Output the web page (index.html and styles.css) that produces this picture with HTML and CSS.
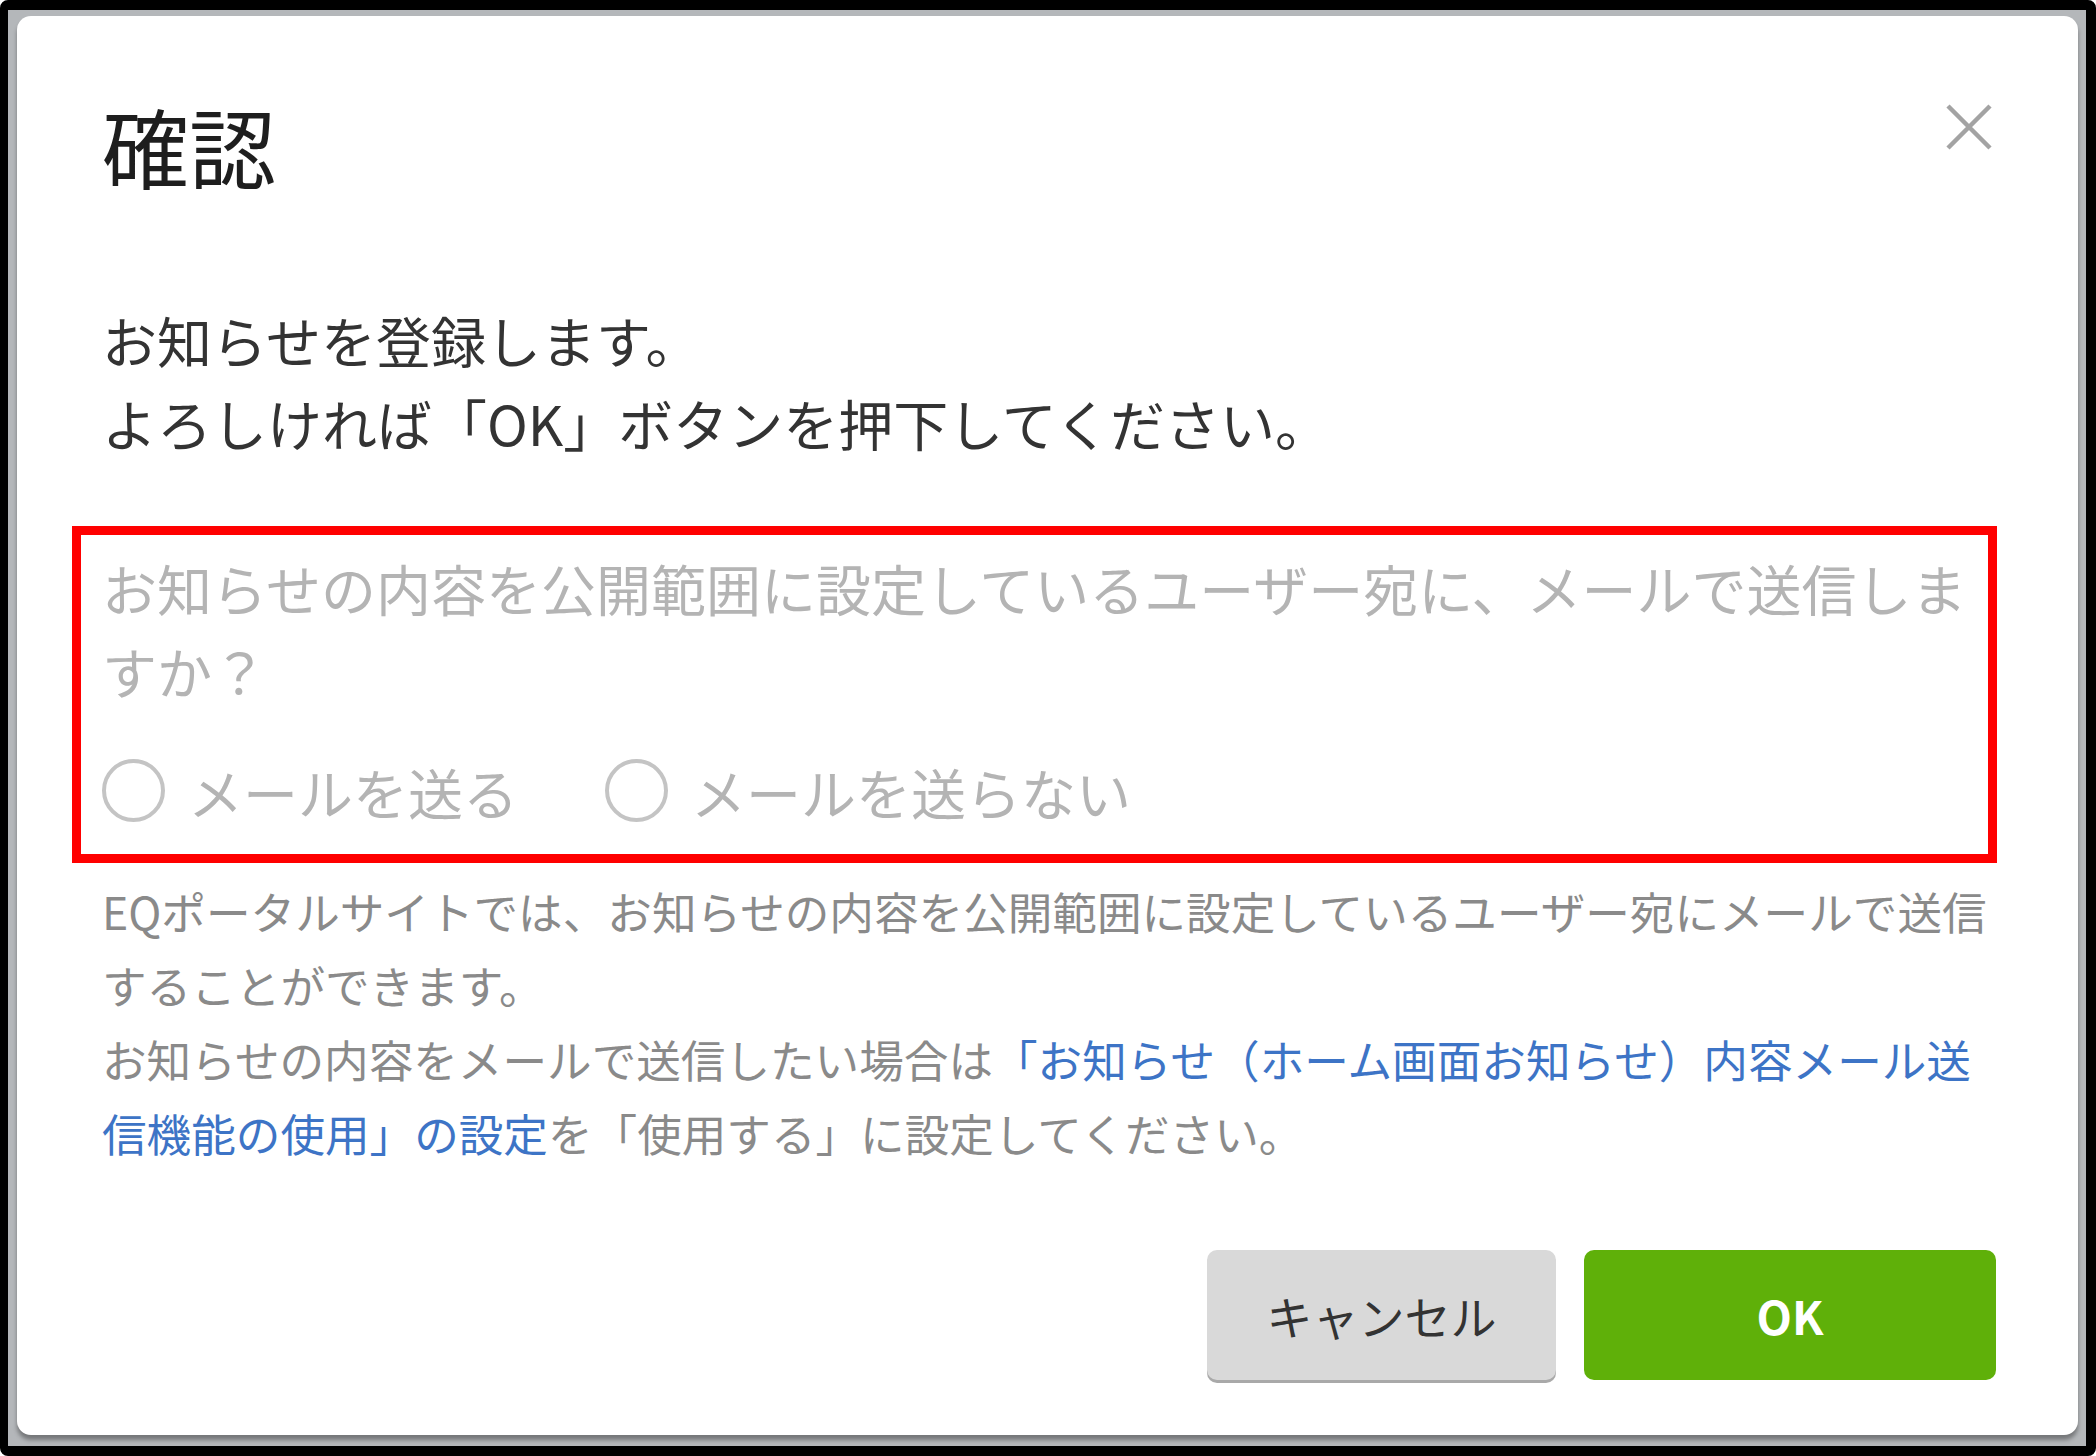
FILE: index.html
```html
<!DOCTYPE html>
<html lang="ja">
<head>
  <meta charset="UTF-8" />
  <meta name="viewport" content="width=device-width, initial-scale=1.0"/>
  <title>確認</title>
  <link rel="stylesheet" href="styles.css">
</head>
<body>

  <div class="frame">
    <div class="dialog">

      <div class="dialog-header">
        <h1 class="dialog-title">確認</h1>
        <button class="close-button" aria-label="閉じる">
          <svg width="48" height="48" viewBox="0 0 48 48">
            <path d="M3 3 L45 45 M45 3 L3 45" stroke="#a3a3a3" stroke-width="4.5" fill="none"/>
          </svg>
        </button>
      </div>

      <p class="message">お知らせを登録します。<br>よろしければ「OK」ボタンを押下してください。</p>

      <div class="mail-option">
        <p class="question">お知らせの内容を公開範囲に設定しているユーザー宛に、メールで送信しますか？</p>
        <div class="radio-row">
          <label class="radio-item"><span class="radio-circle"></span><span class="radio-label">メールを送る</span></label>
          <label class="radio-item"><span class="radio-circle"></span><span class="radio-label">メールを送らない</span></label>
        </div>
      </div>

      <p class="help">EQポータルサイトでは、お知らせの内容を公開範囲に設定しているユーザー宛にメールで送信することができます。<br>お知らせの内容をメールで送信したい場合は<a class="help-link" href="#">「お知らせ（ホーム画面お知らせ）内容メール送信機能の使用」の設定</a>を「使用する」に設定してください。</p>

      <div class="dialog-footer">
        <button class="btn btn-cancel">キャンセル</button>
        <button class="btn btn-ok">OK</button>
      </div>

    </div>
  </div>

</body>
</html>
```

FILE: styles.css
```css
body {
  margin: 0;
  background-color: #fff;
  font-family: "Noto Sans CJK JP", "Noto Sans", sans-serif;
  color: #333;
}

.frame {
  box-sizing: border-box;
  width: 2096px;
  height: 1456px;
  border-style: solid;
  border-color: #000;
  border-width: 10px 10px 10px 8px;
  border-radius: 8px;
  background-color: #b4b7ba;
  padding: 6px 8px 11px 9px;
  display: flex;
}

.dialog {
  flex: 1;
  display: flex;
  flex-direction: column;
  background-color: #fff;
  border-radius: 14px;
  box-shadow: 0 5px 4px rgba(0, 0, 0, 0.35);
  padding: 76px 82px 55px 85px;
}

.dialog-header {
  display: flex;
  justify-content: space-between;
  align-items: flex-start;
}

.dialog-title {
  margin: 0;
  font-size: 87px;
  line-height: 106px;
  font-weight: 400;
  color: #1e1e1e;
}

.close-button {
  margin: 11px 3px 0 0;
  padding: 0;
  border: none;
  background: none;
  width: 48px;
  height: 48px;
  cursor: pointer;
}

.close-button svg {
  display: block;
}

.message {
  margin: 100px 0 0;
  font-size: 55px;
  line-height: 83px;
  color: #333;
}

.mail-option {
  position: relative;
  margin-top: 82px;
}

/* red annotation frame */
.mail-option::before {
  content: "";
  position: absolute;
  top: -20px;
  left: -30px;
  right: -1px;
  bottom: -31px;
  border: 9px solid #ff0000;
  pointer-events: none;
}

.question {
  margin: 0;
  font-size: 55px;
  line-height: 83px;
  color: #b4b4b4;
}

.radio-row {
  display: flex;
  align-items: center;
  margin-top: 37px;
  height: 83px;
}

.radio-item {
  display: flex;
  align-items: center;
  margin-right: 87px;
}

.radio-label {
  font-size: 55px;
  line-height: 66px;
  color: #b4b4b4;
}

.radio-circle {
  box-sizing: border-box;
  width: 63px;
  height: 63px;
  border: 4px solid #c4c4c4;
  border-radius: 50%;
  margin-right: 23px;
}

.help {
  margin: 42px 0 0;
  font-size: 44.6px;
  line-height: 74px;
  color: #8a8a8a;
}

.help-link {
  color: #3d74c6;
  text-decoration: none;
}

.dialog-footer {
  margin-top: auto;
  display: flex;
  justify-content: flex-end;
  gap: 28px;
}

.btn {
  height: 130px;
  border: none;
  border-radius: 10px;
  font-family: "Noto Sans CJK JP", "Noto Sans", sans-serif;
  font-size: 46px;
  cursor: pointer;
}

.btn-cancel {
  width: 349px;
  background-color: #d9d9d9;
  color: #333;
  font-weight: 400;
  box-shadow: 0 3px 0 #a9a9a9;
}

.btn-ok {
  width: 412px;
  background-color: #5fb009;
  color: #fff;
  font-weight: 700;
}
```
